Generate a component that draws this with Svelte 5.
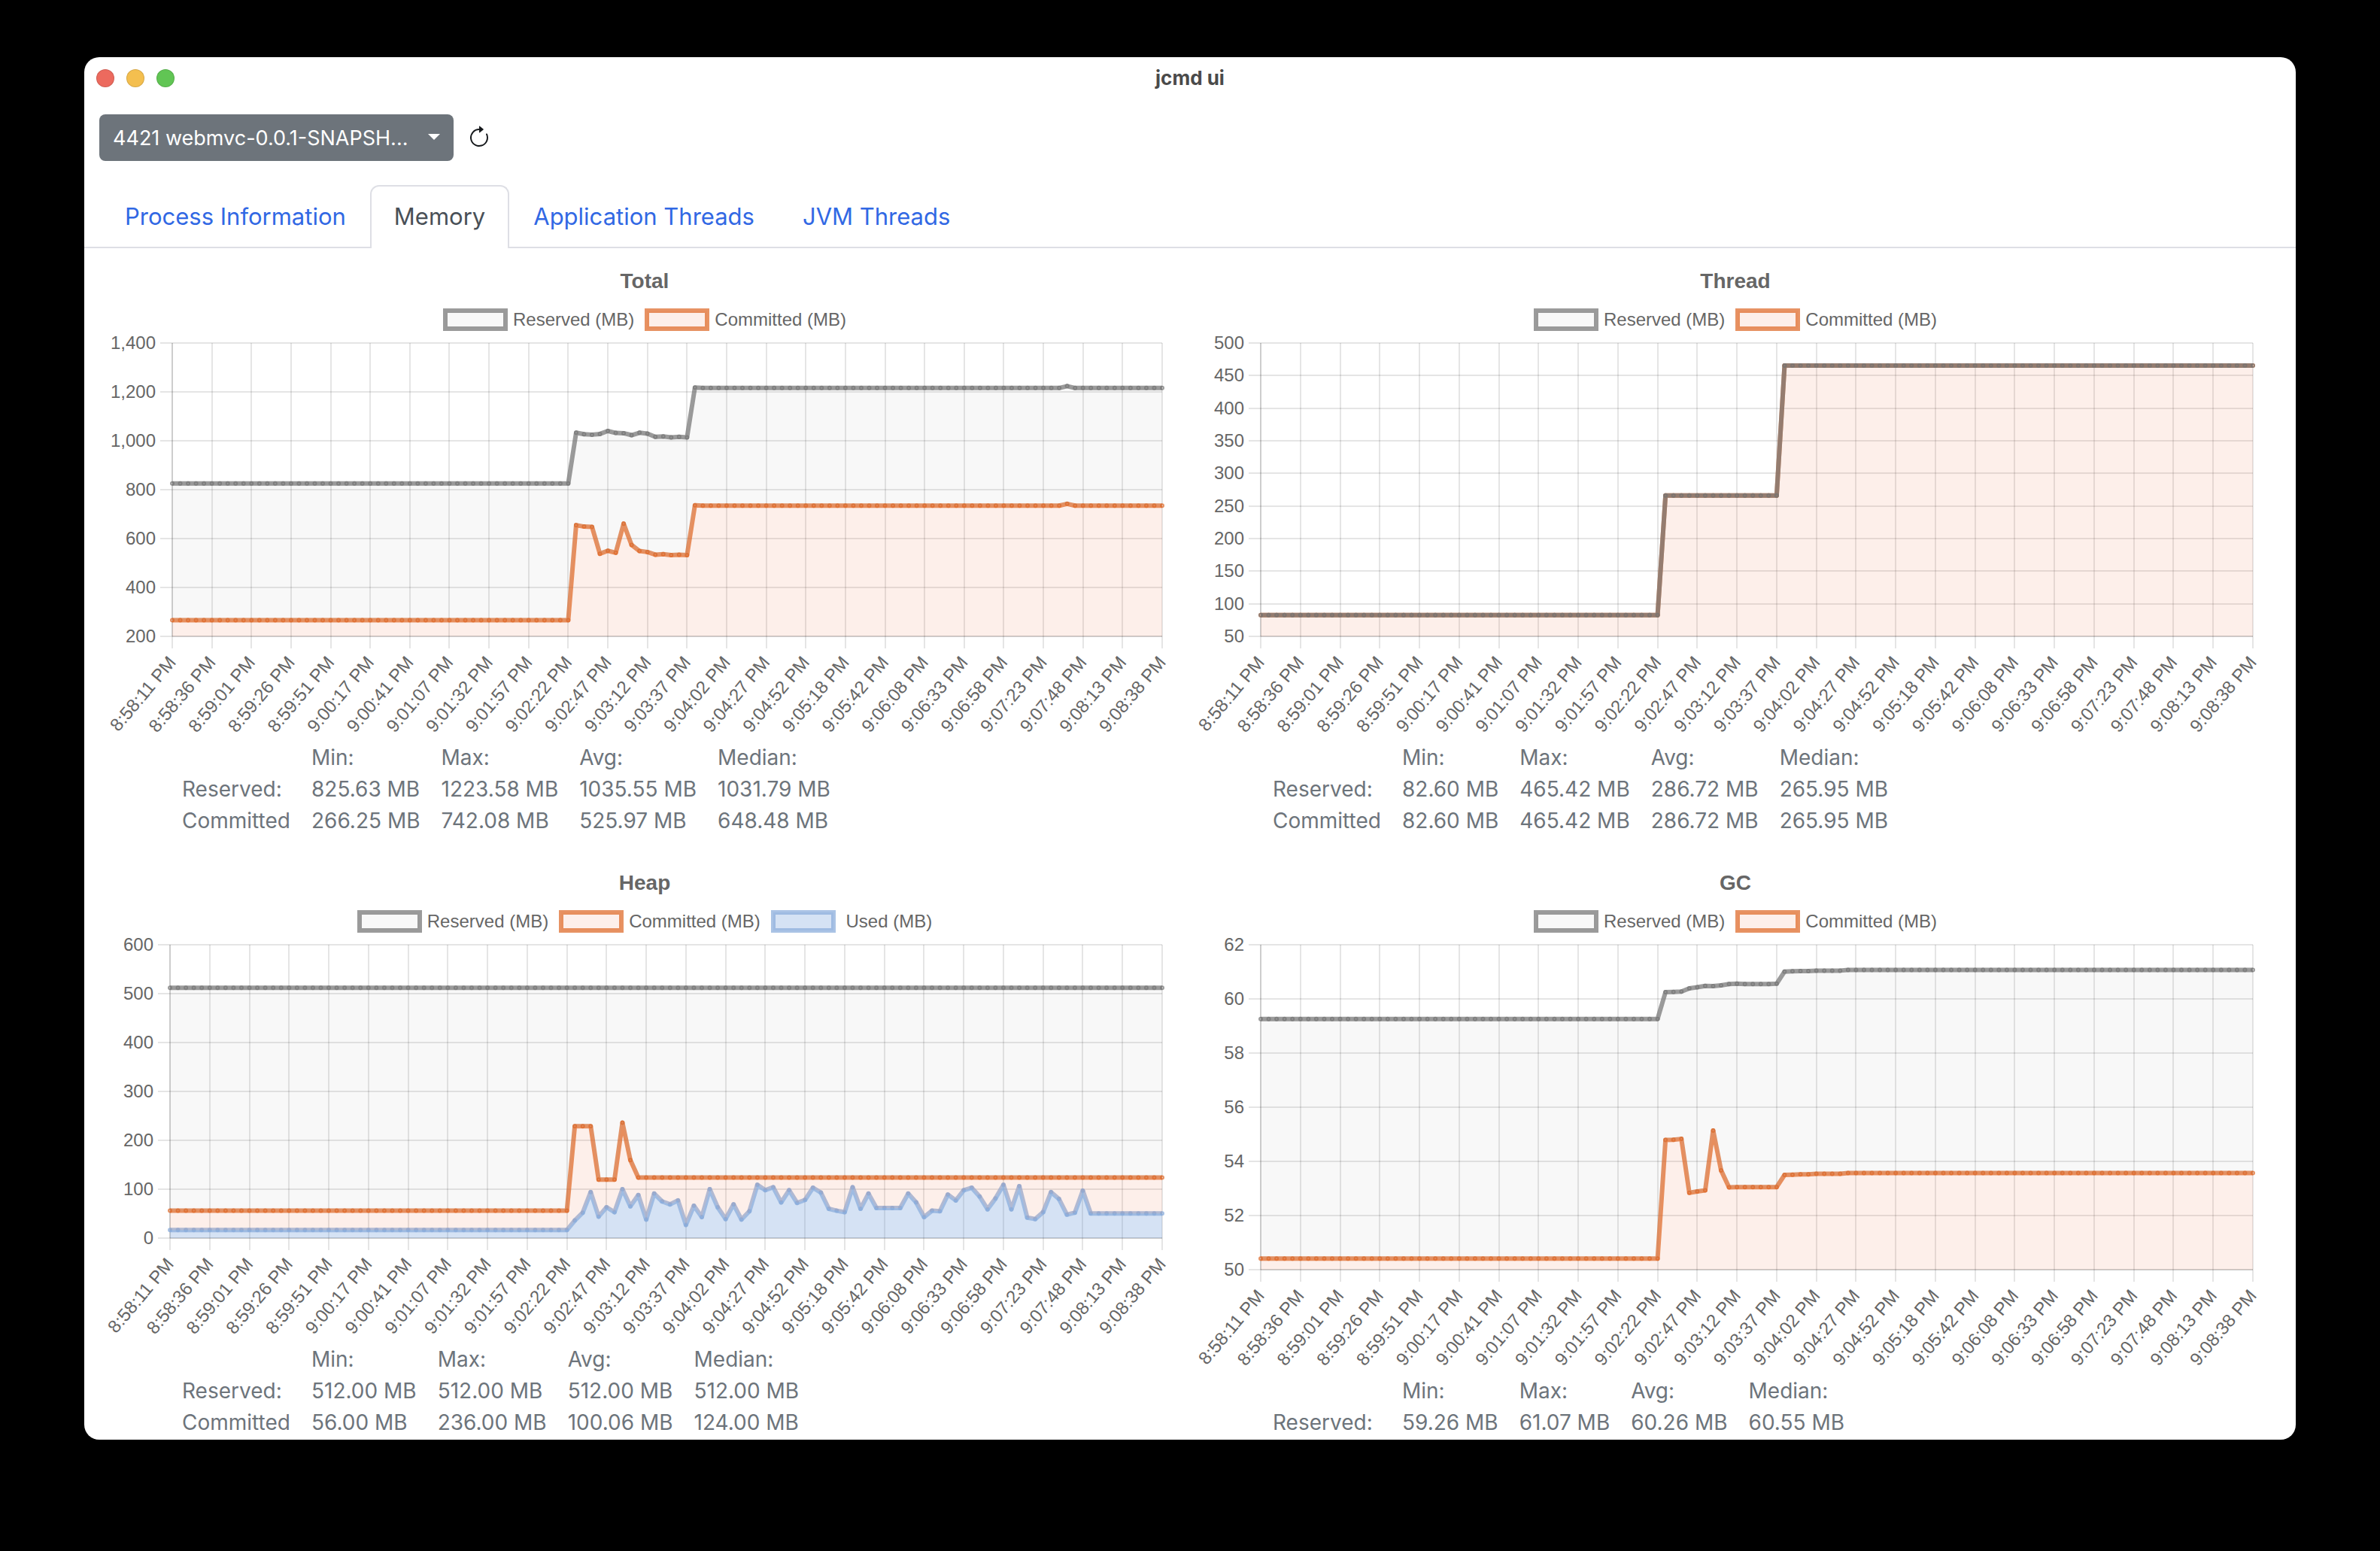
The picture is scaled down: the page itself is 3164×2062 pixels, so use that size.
<script>
  const rep = (value, count) => Array(count).fill(value);

  const palette = {
    Reserved: { line: 'rgba(118, 118, 118, 0.73)', fill: 'rgba(128, 128, 128, 0.06)' },
    Committed: { line: 'rgba(222, 106, 41, 0.73)', fill: 'rgba(235, 110, 60, 0.11)' },
    Used: { line: 'rgba(138, 173, 220, 0.73)', fill: 'rgba(100, 149, 215, 0.27)' }
  };

  const times = [
    '8:58:11', '8:58:36', '8:59:01', '8:59:26', '8:59:51', '9:00:17', '9:00:41', '9:01:07', '9:01:32',
    '9:01:57', '9:02:22', '9:02:47', '9:03:12', '9:03:37', '9:04:02', '9:04:27', '9:04:52', '9:05:18',
    '9:05:42', '9:06:08', '9:06:33', '9:06:58', '9:07:23', '9:07:48', '9:08:13', '9:08:38'
  ].map((t) => t + ' PM');
  const lastIndex = 125;

  const threadData = [...rep(82.6, 51), ...rep(265.95, 15), ...rep(465.42, 60)];

  const charts = [
    {
      title: 'Total', min: 200, max: 1400, step: 200, axis: 85,
      series: [
        {
          name: 'Reserved',
          data: [
            ...rep(825.63, 51), 1033, 1027, 1025, 1028, 1040, 1032, 1031, 1023, 1033, 1029, 1016, 1018, 1014,
            1016, 1014, 1218, ...rep(1216, 46), 1223.58, ...rep(1216, 12)
          ]
        },
        {
          name: 'Committed',
          data: [
            ...rep(266.25, 51), 655, 649, 648, 538, 550, 542, 661, 574, 549, 545, 534, 536, 532, 534, 532,
            736, ...rep(734.7, 46), 742.08, ...rep(734.7, 12)
          ]
        }
      ],
      stats: [
        ['Reserved:', '825.63', '1223.58', '1035.55', '1031.79'],
        ['Committed', '266.25', '742.08', '525.97', '648.48']
      ]
    },
    {
      title: 'Thread', min: 50, max: 500, step: 50, axis: 82,
      series: [
        { name: 'Reserved', data: threadData },
        { name: 'Committed', data: threadData }
      ],
      stats: [
        ['Reserved:', '82.60', '465.42', '286.72', '265.95'],
        ['Committed', '82.60', '465.42', '286.72', '265.95']
      ]
    },
    {
      title: 'Heap', min: 0, max: 600, step: 100, axis: 82,
      series: [
        { name: 'Reserved', data: rep(512, 126) },
        {
          name: 'Committed',
          data: [...rep(56, 51), 229, 229, 229, 119.5, 119.5, 119.5, 236, 159.5, ...rep(124, 67)]
        },
        {
          name: 'Used',
          data: [
            ...rep(16.4, 51), 36, 52, 94, 44, 63, 53, 100, 65, 88, 38, 91, 75, 69, 77, 27, 66, 43, 100, 63,
            39, 69, 38, 55, 109, 98, 104, 73, 98, 72, 78, 103, 93, 60, 56, 53, 104, 60, 91, 61.5, 61.5, 61.5,
            61.5, 91, 73, 43, 56, 55, 89, 77, 98, 103, 85, 59, 81, 109, 59, 106, 42, 39, 53, 94, 80, 48, 52,
            97, ...rep(50.3, 10)
          ]
        }
      ],
      stats: [
        ['Reserved:', '512.00', '512.00', '512.00', '512.00'],
        ['Committed', '56.00', '236.00', '100.06', '124.00']
      ]
    },
    {
      title: 'GC', min: 50, max: 62, step: 2, axis: 82,
      series: [
        {
          name: 'Reserved',
          data: [
            ...rep(59.26, 51), 60.25, 60.26, 60.27, 60.39, 60.43, 60.48, 60.47, 60.5, 60.55, 60.56,
            ...rep(60.55, 4), 60.56, 61.01, 61.02, 61.03, 61.03, ...rep(61.045, 4), ...rep(61.07, 52)
          ]
        },
        {
          name: 'Committed',
          data: [
            ...rep(50.41, 51), 54.79, 54.8, 54.83, 52.84, 52.89, 52.93, 55.14, 53.67, 53.04, ...rep(53.05, 6),
            53.5, 53.51, 53.52, 53.52, ...rep(53.54, 4), ...rep(53.57, 52)
          ]
        }
      ],
      stats: [['Reserved:', '59.26', '61.07', '60.26', '60.55']]
    }
  ];

  const tabs = ['Process Information', 'Memory', 'Application Threads', 'JVM Threads'];
  let activeTab = $state('Memory');

  let sizes = $state(charts.map(() => ({ w: 1426, h: 546 })));
  let hidden = $state({});

  const plotTop = 16;
  const labelRoom = 140;
  const rightRoom = 25;

  function layout(chart, size) {
    const bottom = size.h - labelRoom;
    const right = size.w - rightRoom;
    const x = (i) => chart.axis + ((right - chart.axis) * i) / lastIndex;
    const y = (v) => bottom - ((v - chart.min) / (chart.max - chart.min)) * (bottom - plotTop);
    const ticks = [];
    for (let v = chart.min; v <= chart.max; v += chart.step) ticks.push(v);

    const shapes = chart.series.map((s, n) => {
      const points = s.data.map((v, i) => [x(i), y(v)]);
      const line = points.map((p) => p.join(',')).join(' ');
      const below = chart.series[n + 1];
      const base = below
        ? below.data.map((v, i) => [x(i), y(v)]).reverse()
        : [[right, bottom], [chart.axis, bottom]];
      return { name: s.name, points, line, area: line + ' ' + base.map((p) => p.join(',')).join(' ') };
    });
    return { bottom, right, x, y, ticks, shapes: shapes.reverse() };
  }
</script>

<div class="desktop">
  <main class="window">
    <header class="titlebar">
      <div class="lights">
        <button class="light close" aria-label="Close"></button>
        <button class="light minimize" aria-label="Minimize"></button>
        <button class="light zoom" aria-label="Zoom"></button>
      </div>
      <h1>jcmd ui</h1>
    </header>

    <div class="toolbar">
      <div class="picker">
        <select aria-label="Java process">
          <option>4421 webmvc-0.0.1-SNAPSH...</option>
        </select>
        <svg class="caret" viewBox="0 0 16 8" aria-hidden="true"><path d="M0 0h16L8 8z" /></svg>
      </div>
      <button class="refresh" aria-label="Refresh">
        <svg viewBox="0 0 16 16" aria-hidden="true">
          <path fill-rule="evenodd" d="M8 3a5 5 0 1 0 4.546 2.914.5.5 0 0 1 .908-.417A6 6 0 1 1 8 2z" />
          <path d="M8 4.466V.534a.25.25 0 0 1 .41-.192l2.36 1.966c.12.1.12.284 0 .384L8.41 4.658A.25.25 0 0 1 8 4.466" />
        </svg>
      </button>
    </div>

    <nav class="tabs">
      {#each tabs as tab}
        <a href="#{tab.replaceAll(' ', '-')}" class:active={tab === activeTab} onclick={() => (activeTab = tab)}>{tab}</a>
      {/each}
    </nav>

    <div class="charts">
      {#each charts as chart, c}
        {@const g = layout(chart, sizes[c])}
        <section class="card">
          <h2>{chart.title}</h2>
          <div class="legend">
            {#each chart.series as s}
              {@const key = chart.title + s.name}
              <button class:off={hidden[key]} onclick={() => (hidden[key] = !hidden[key])}>
                <svg class="swatch" width="86" height="30" aria-hidden="true">
                  <rect x="3" y="3" width="80" height="24" fill={palette[s.name].fill} stroke={palette[s.name].line} stroke-width="6" />
                </svg>
                <span>{s.name === 'Used' ? '\u00a0' : ''}{s.name} (MB)</span>
              </button>
            {/each}
          </div>

          <div class="plot" bind:clientWidth={sizes[c].w} bind:clientHeight={sizes[c].h}>
            <svg width="100%" height={sizes[c].h} role="img" aria-label="{chart.title} memory over time">
              <g class="grid">
                {#each times as _, i}
                  {@const gx = Math.round(g.x(i * 5))}
                  <line x1={gx} x2={gx} y1={plotTop} y2={g.bottom + 16} />
                {/each}
                {#each g.ticks as t}
                  {@const gy = Math.round(g.y(t))}
                  <line x1={chart.axis - 16} x2={g.right} y1={gy} y2={gy} />
                {/each}
                <line x1={chart.axis} x2={chart.axis} y1={plotTop} y2={g.bottom} />
                <line x1={chart.axis} x2={g.right} y1={g.bottom} y2={g.bottom} />
              </g>

              {#each g.shapes as s}
                {#if !hidden[chart.title + s.name]}
                  <polygon points={s.area} fill={palette[s.name].fill} />
                  <polyline points={s.line} fill="none" stroke={palette[s.name].line} stroke-width="6" stroke-linejoin="round" />
                  {#each s.points as p}
                    <circle cx={p[0]} cy={p[1]} r="2" fill={palette[s.name].fill} stroke={palette[s.name].line} stroke-width="2" />
                  {/each}
                {/if}
              {/each}

              <g class="labels">
                {#each g.ticks as t}
                  <text x={chart.axis - 22} y={g.y(t) + 8}>{t.toLocaleString('en-US')}</text>
                {/each}
                {#each times as time, i}
                  <text y="8" transform="translate({g.x(i * 5)} {g.bottom + 30}) rotate(-50)">{time}</text>
                {/each}
              </g>
            </svg>
          </div>

          <table>
            <thead>
              <tr><td></td><th scope="col">Min:</th><th scope="col">Max:</th><th scope="col">Avg:</th><th scope="col">Median:</th></tr>
            </thead>
            <tbody>
              {#each chart.stats as [label, ...values]}
                <tr>
                  <th scope="row">{label}</th>
                  {#each values as v}<td>{v} MB</td>{/each}
                </tr>
              {/each}
            </tbody>
          </table>
        </section>
      {/each}
    </div>
  </main>
</div>

<style>
  :global(body) {
    margin: 0;
    background: #000;
  }

  .desktop {
    box-sizing: border-box;
    height: 100vh;
    padding: 76px 112px 148px;
    display: flex;
    font-family: Inter, 'Liberation Sans', sans-serif;
    background: #000;
  }

  .window {
    flex: 1;
    min-width: 0;
    overflow: hidden;
    border-radius: 20px;
    background: #fff;
  }

  button {
    border: 0;
    padding: 0;
    background: none;
    font: inherit;
    color: inherit;
  }

  .titlebar {
    display: grid;
    grid-template-columns: 1fr auto 1fr;
    align-items: center;
    height: 56px;
    padding: 0 16px;
  }

  .lights {
    display: flex;
    gap: 16px;
  }

  .light {
    box-sizing: border-box;
    width: 24px;
    height: 24px;
    border-radius: 50%;
    border: 1px solid rgba(0, 0, 0, 0.12);
  }

  .close {
    background: #ec6a5e;
  }

  .minimize {
    background: #f4bf4f;
  }

  .zoom {
    background: #61c554;
  }

  h1 {
    margin: 0;
    font-size: 26px;
    font-weight: 700;
    line-height: 32px;
    color: #4a4a4a;
  }

  .toolbar {
    display: flex;
    align-items: center;
    gap: 18px;
    padding: 20px 20px 32px;
  }

  .picker {
    position: relative;
    width: 471px;
  }

  select {
    appearance: none;
    display: block;
    width: 100%;
    height: 62px;
    padding: 0 50px 0 18px;
    border: 0;
    border-radius: 8px;
    background: #6d747b;
    color: #fff;
    font-family: inherit;
    font-size: 27px;
  }

  .caret {
    position: absolute;
    top: 26px;
    right: 18px;
    width: 16px;
    height: 8px;
    fill: #fff;
    pointer-events: none;
  }

  .refresh {
    width: 32px;
    height: 32px;
  }

  .refresh svg {
    display: block;
    fill: #16191c;
  }

  .tabs {
    display: flex;
    padding: 0 22px;
    box-shadow: inset 0 -2px #dedfe5;
  }

  .tabs a {
    height: 50px;
    padding: 16px 30px;
    border: 2px solid transparent;
    border-bottom: 0;
    border-radius: 12px 12px 0 0;
    font-size: 31px;
    line-height: 48px;
    color: #3168e4;
    text-decoration: none;
  }

  .tabs a.active {
    border-color: #dedfe5;
    background: #fff;
    color: #495057;
  }

  .charts {
    display: grid;
    grid-template-columns: repeat(2, minmax(0, 1fr));
    gap: 44px 24px;
    padding: 26px 32px 0;
  }

  .card {
    display: flex;
    flex-direction: column;
  }

  h2 {
    margin: 0 0 18px;
    font-family: 'Liberation Sans', Arial, sans-serif;
    font-size: 28px;
    font-weight: 700;
    line-height: 36px;
    text-align: center;
    color: #666;
  }

  .legend {
    display: flex;
    justify-content: center;
    gap: 14px;
    height: 30px;
    font-family: 'Liberation Sans', Arial, sans-serif;
    font-size: 24px;
    line-height: 30px;
    color: #666;
  }

  .legend button {
    display: flex;
    gap: 7px;
  }

  .legend .off span {
    text-decoration: line-through;
  }

  .plot {
    flex: 1 0 546px;
  }

  .plot svg {
    display: block;
    overflow: visible;
  }

  .grid line {
    stroke: rgba(0, 0, 0, 0.1);
    stroke-width: 2;
  }

  .labels text {
    font-family: 'Liberation Sans', Arial, sans-serif;
    font-size: 24px;
    fill: #666;
    text-anchor: end;
  }

  table {
    align-self: flex-start;
    margin-left: 98px;
    border-collapse: collapse;
    font-size: 28px;
    line-height: 42px;
    color: #6d747b;
  }

  th,
  td {
    padding: 0 28px 0 0;
    font-weight: 400;
    text-align: left;
    white-space: nowrap;
  }

  tbody th {
    min-width: 144px;
  }
</style>
